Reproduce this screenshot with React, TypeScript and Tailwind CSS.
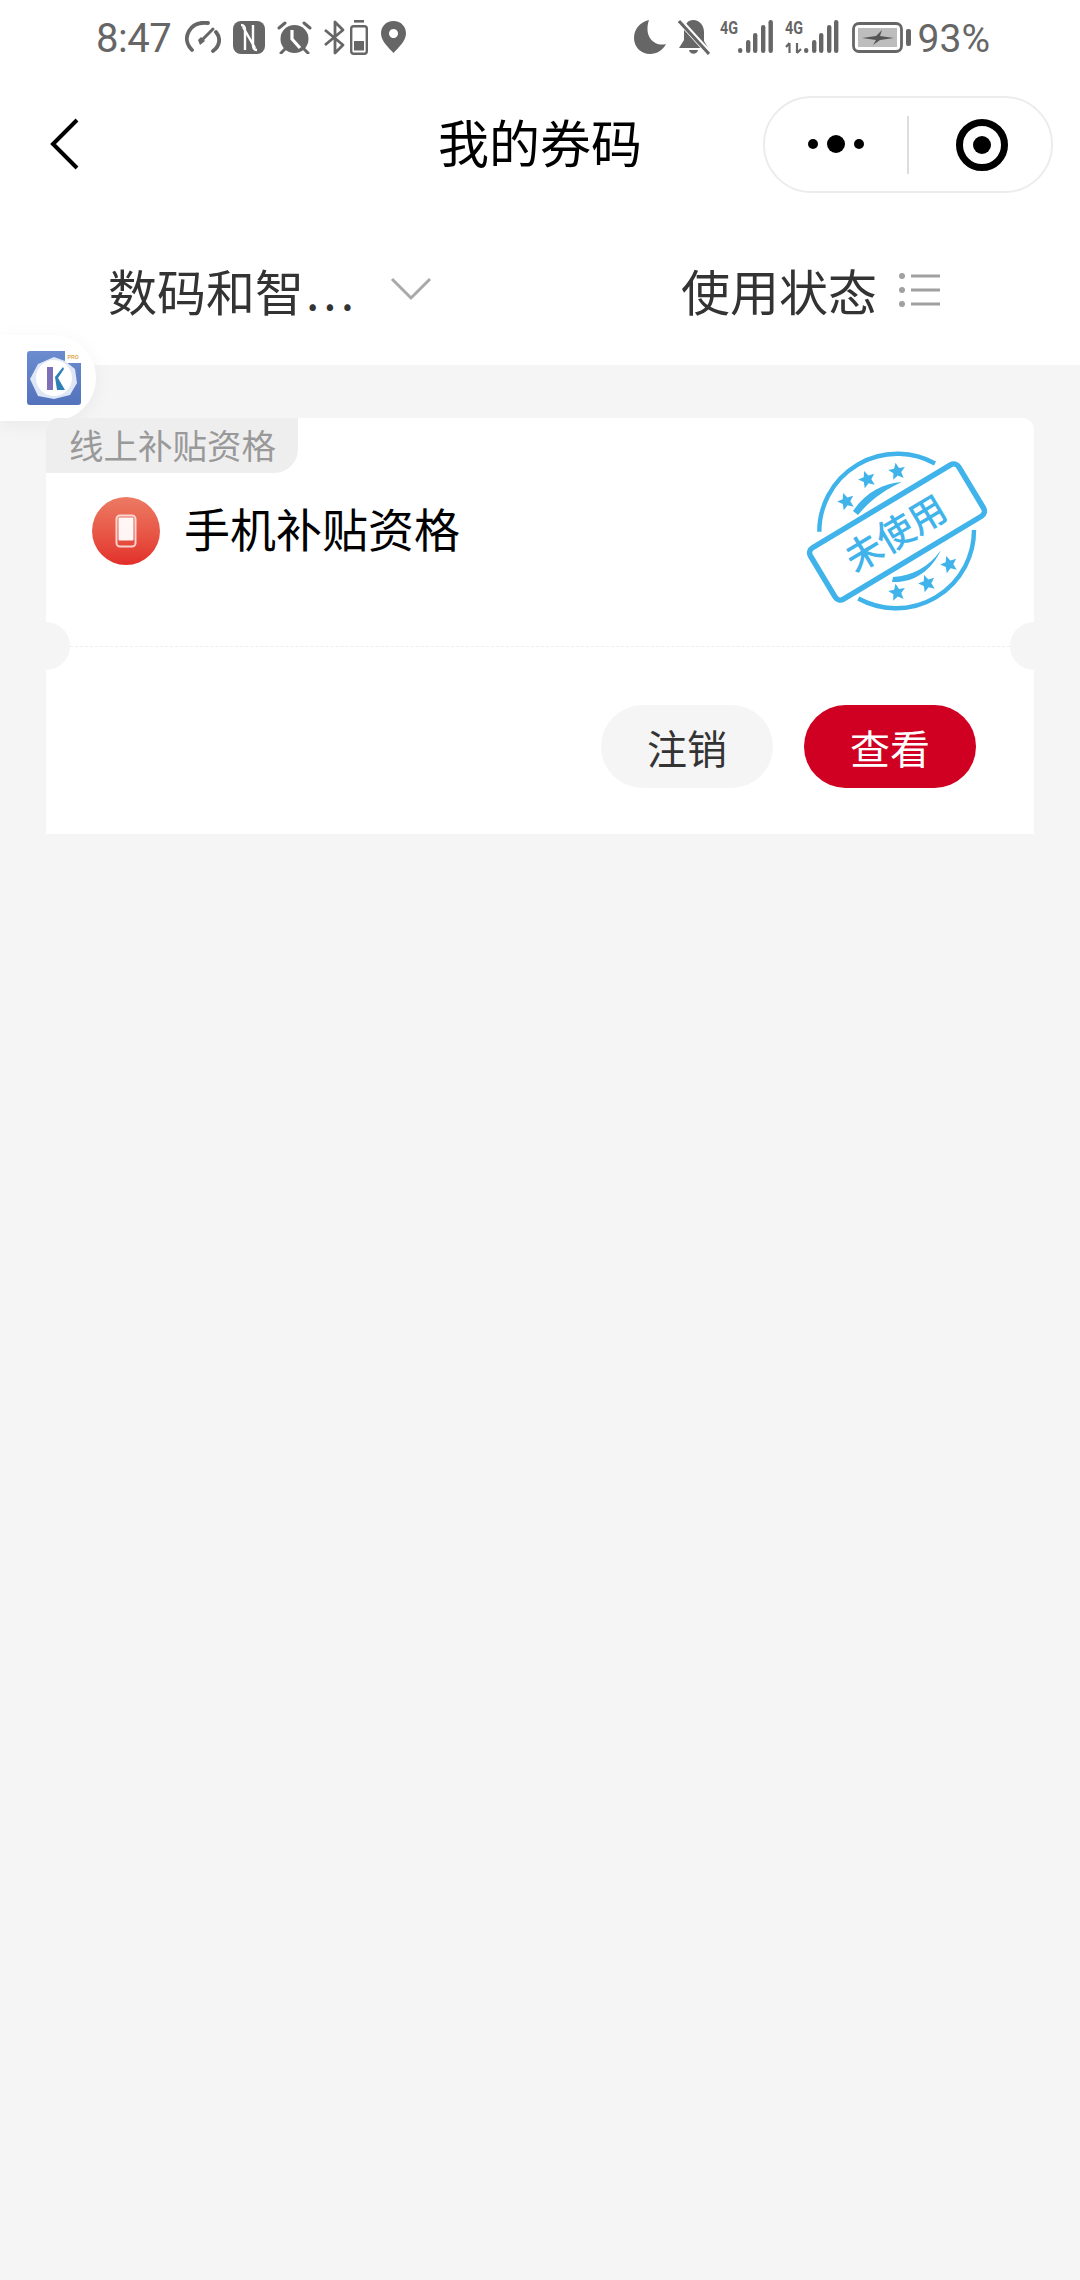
import React from "react";

const G = "#666666";

function Gauge() {
  return (
    <svg width="36" height="32" viewBox="0 0 36 32" fill="none" stroke={G} strokeWidth="3.800" strokeLinecap="round">
      <path d="M7 29 C2 24 0 17 4 10 C8 3 15 1 23 2" />
      <path d="M31 11 C36 17 35 25 28 30" />
      <path d="M28 8 L17 19" strokeWidth="3" />
      <path d="M13 19 L16 16 L20 20 L15 24 Z" fill={G} stroke="none" />
    </svg>
  );
}
function Nfc() {
  return (
    <svg width="32" height="33" viewBox="0 0 32 33">
      <rect width="32" height="33" rx="8" fill={G} />
      <path d="M8 4 C11 4 12 6 12 9 V29 M24 29 C21 29 20 27 20 24 V4 M10 6 L22 27" stroke="#fff" strokeWidth="2.400" fill="none" />
    </svg>
  );
}
function Alarm() {
  return (
    <svg width="35" height="33" viewBox="0 0 35 33">
      <circle cx="17.500" cy="18" r="14" fill={G} />
      <path d="M15 9 V18 L23 27" stroke="#fff" strokeWidth="3.200" fill="none" />
      <path d="M2 7 L8 2 M33 7 L27 2 M4 32 L8 28 M31 32 L27 28" stroke={G} strokeWidth="3" strokeLinecap="round" />
    </svg>
  );
}
function BtBattery() {
  return (
    <svg width="44" height="35" viewBox="0 0 44 35" fill="none">
      <path d="M1 10 L19 25 L11 33 V2 L19 10 L1 25" stroke={G} strokeWidth="2.800" strokeLinejoin="round" />
      <rect x="27.200" y="6.200" width="15.600" height="27.600" rx="2.500" stroke={G} strokeWidth="2.400" />
      <rect x="30" y="0" width="10" height="2.600" fill={G} />
      <rect x="30" y="21" width="10" height="9.500" fill={G} />
    </svg>
  );
}
function Pin() {
  return (
    <svg width="25" height="32" viewBox="0 0 25 32">
      <path fillRule="evenodd" d="M12.500 0 C20 0 25 5.500 25 12.500 C25 20 17 27 12.500 32 C8 27 0 20 0 12.500 C0 5.500 5 0 12.500 0 Z M12.500 8 a4.500 4.500 0 1 0 0.010 0 Z" fill={G} />
    </svg>
  );
}
function Moon() {
  return (
    <svg width="32" height="34" viewBox="0 0 32 34">
      <path d="M15 0 C6 2 0 9 0 18 C0 27 7 34 16 34 C23 34 29 30 32 24 C22 27 9 18 15 0 Z" fill={G} />
    </svg>
  );
}
function BellOff() {
  return (
    <svg width="32" height="36" viewBox="0 0 32 36">
      <path d="M15 1 C22 1 26 7 26 13 V22 L30 29 H1 L6 21 V11 C7 5 10 1 15 1 Z" fill={G} />
      <path d="M11 31 H20 C19 36 12 36 11 31 Z" fill={G} />
      <path d="M1 1 L31 34" stroke="#fff" strokeWidth="6" />
      <path d="M1 2 L31 35" stroke={G} strokeWidth="3" />
    </svg>
  );
}
function Signal({ arrows }: { arrows?: boolean }) {
  const x = arrows ? [19, 27, 34, 42, 49] : [18, 26, 33, 41, 48.500];
  const tops = [28, 20, 13, 5, 0];
  const w = arrows ? 54 : 53;
  return (
    <svg width={w} height="42" viewBox={`0 -4 ${w} 42`} className="block">
      <text x="0" y="14" fontSize="19" fontWeight="700" fill={G} textLength="18" lengthAdjust="spacingAndGlyphs" fontFamily="Roboto, sans-serif">4G</text>
      {arrows && <path d="M4.500 33 V23 M1 27 L4.500 23 M12 23 V33 M12 33 L16 29" stroke={G} strokeWidth="2.200" fill="none" />}
      {x.map((bx, i) => (
        <rect key={i} x={bx} y={tops[i]} width="4.400" height={33 - tops[i]} rx="2.200" fill={G} />
      ))}
    </svg>
  );
}
function Battery() {
  return (
    <svg width="59" height="31" viewBox="0 0 59 31">
      <rect x="1.500" y="1.500" width="48" height="28" rx="5.500" fill="none" stroke={G} strokeWidth="2.800" />
      <rect x="6" y="6" width="39" height="19" fill="#bdbdbd" />
      <path d="M10 16 L24 14 L30 8 L28 14 L42 16 L28 18 L21 23 L24 18 Z" fill="#555555" />
      <rect x="54" y="7" width="5" height="17" rx="2" fill={G} />
    </svg>
  );
}

function Phone() {
  return (
    <svg width="22" height="34" viewBox="0 0 22 34" fill="none">
      <rect x="1.500" y="1.500" width="19" height="31" rx="3.500" stroke="#ffffff" strokeOpacity="0.75" strokeWidth="2" />
      <rect x="3.500" y="3.500" width="15" height="23" rx="1" fill="#ffffff" fillOpacity="0.95" />
    </svg>
  );
}

function Star({ x, y, r = 0 }: { x: number; y: number; r?: number }) {
  return (
    <path
      transform={`translate(${x} ${y}) rotate(${r})`}
      d="M0 -8.500 L2.500 -2.700 L8.500 -2.500 L4 1.700 L5.300 8 L0 4.600 L-5.300 8 L-4 1.700 L-8.500 -2.500 L-2.500 -2.700 Z"
      fill="#3fb3ea"
    />
  );
}

function Stamp() {
  return (
    <svg width="200" height="170" viewBox="800 450 200 170" fill="none">
      <g stroke="#3fb3ea" strokeWidth="4.400" strokeLinecap="butt">
        <path d="M819.300 531.700 A78 78 0 0 1 935 463.500" />
        <path d="M974 530 A78 78 0 0 1 858.300 598.500" />
      </g>
      <path d="M853 511 C866 492 884 483 902 482 C886 489 870 500 858 515 Z" fill="#3fb3ea" />
      <path d="M893 577 C912 576 929 567 941 550 C931 571 914 583 892 582 Z" fill="#3fb3ea" />
      <Star x={846} y={501} r={-20} />
      <Star x={867} y={479} r={-20} />
      <Star x={897} y={471} r={-10} />
      <Star x={949} y={564} r={-20} />
      <Star x={927} y={583} r={-20} />
      <Star x={897} y={592} r={-10} />
      <g transform="rotate(-31 897 532)">
        <rect x="810.500" y="502" width="173" height="60" rx="6" fill="#ffffff" stroke="#3fb3ea" strokeWidth="5.500" />
        <text x="895" y="546" textAnchor="middle" fontSize="37" fontWeight="500" fill="#3fb3ea" fontFamily="'Noto Sans CJK SC', sans-serif">未使用</text>
      </g>
    </svg>
  );
}

export default function App() {
  return (
    <div className="relative w-[1080px] h-[2280px] bg-[#f5f5f6] overflow-hidden font-['Noto_Sans_CJK_SC',sans-serif]">
      <div className="bg-white h-[365px] flex flex-col">
        {/* status bar */}
        <div className="h-[74px] flex items-center justify-between pl-[96px] pr-[90px]">
          <div className="flex items-center">
            <span className="w-[75px] mt-[4px] text-[40px] leading-none text-[#666666] font-['Roboto',sans-serif] tracking-[-0.5px] whitespace-nowrap">8:47</span>
            <div className="ml-[14px]"><Gauge /></div>
            <div className="ml-[12px]"><Nfc /></div>
            <div className="ml-[12px]"><Alarm /></div>
            <div className="ml-[12px]"><BtBattery /></div>
            <div className="ml-[13px]"><Pin /></div>
          </div>
          <div className="flex items-center">
            <Moon />
            <div className="ml-[12px]"><BellOff /></div>
            <div className="ml-[10px]"><Signal /></div>
            <div className="ml-[12px]"><Signal arrows /></div>
            <div className="ml-[13px]"><Battery /></div>
            <span className="ml-[7px] mt-[4px] text-[39px] leading-none text-[#666666] font-['Roboto',sans-serif] whitespace-nowrap">93%</span>
          </div>
        </div>
        {/* nav */}
        <div className="relative h-[97px] mt-[22px] flex items-center justify-center">
          <span className="text-[51px] leading-none text-black mt-[-6px]">我的券码</span>
          <svg className="absolute left-[50px] top-[22px]" width="30" height="52" viewBox="0 0 30 52" fill="none">
            <path d="M27 2 L3 26 L27 50" stroke="#000" strokeWidth="4" />
          </svg>
          <div className="absolute left-[763px] top-0 w-[290px] h-[97px] rounded-full border-2 border-[#ececec] flex items-center">
            <div className="w-[142px] flex items-center justify-center gap-[9px] pb-[2px]">
              <span className="w-[10px] h-[10px] rounded-full bg-black" />
              <span className="w-[18px] h-[18px] rounded-full bg-black" />
              <span className="w-[10px] h-[10px] rounded-full bg-black" />
            </div>
            <div className="w-[2px] h-[58px] bg-[#dddddd]" />
            <div className="flex-1 flex items-center justify-center pl-[4px]">
              <div className="w-[52px] h-[52px] rounded-full border-[7px] border-black flex items-center justify-center">
                <div className="w-[18px] h-[18px] rounded-full bg-black" />
              </div>
            </div>
          </div>
        </div>
        {/* filters */}
        <div className="flex items-center h-[100px] mt-[46px] text-[#333333]">
          <div className="w-[540px] flex items-center pl-[108px]">
            <span className="text-[49px] leading-none whitespace-nowrap">数码和智</span>
            <span className="ml-[2px] text-[48px] leading-none tracking-[4px] whitespace-nowrap">...</span>
            <svg className="ml-[32px]" width="42" height="26" viewBox="0 0 42 26" fill="none">
              <path d="M2 3 L21 22 L40 3" stroke="#a9a9a9" strokeWidth="3" />
            </svg>
          </div>
          <div className="flex items-center ml-[141px]">
            <span className="text-[49px] leading-none whitespace-nowrap">使用状态</span>
            <svg className="ml-[22px] mt-[2px]" width="42" height="36" viewBox="0 0 42 36" fill="none">
              <path d="M12 4 H41 M12 18 H41 M12 32 H41" stroke="#a0a0a0" strokeWidth="3" />
              <circle cx="3" cy="4" r="3" fill="#a0a0a0" />
              <circle cx="3" cy="18" r="3" fill="#a0a0a0" />
              <circle cx="3" cy="32" r="3" fill="#a0a0a0" />
            </svg>
          </div>
        </div>
      </div>

      {/* floating button */}
      <div className="absolute left-0 top-[335px] w-[96px] h-[86px] bg-white rounded-r-[43px] shadow-[0_4px_20px_rgba(0,0,0,0.05)] flex items-center pl-[27px]">
        <svg width="54" height="54" viewBox="0 0 54 54">
          <defs>
            <linearGradient id="kb" x1="0" y1="0" x2="0" y2="1">
              <stop offset="0" stopColor="#6c8ccf" />
              <stop offset="1" stopColor="#5372bd" />
            </linearGradient>
          </defs>
          <path d="M3 0 H38 V12 H54 V51 a3 3 0 0 1 -3 3 H3 a3 3 0 0 1 -3 -3 V3 a3 3 0 0 1 3 -3 Z" fill="url(#kb)" />
          <path d="M27 6 L38 10 L48 18 L50 32 L43 44 L27 48 L11 45 L3 28 L11 13 Z" fill="#dfe7f6" />
          <circle cx="27" cy="27" r="18" fill="#ffffff" />
          <rect x="20" y="16" width="6" height="23" fill="#7d6fb8" />
          <path d="M28 26 L36 16 L37 18 L31 27 L38 39 H30 Z" fill="#2e7fb5" />
          <text x="40.500" y="8" fontSize="5.200" fontWeight="700" fill="#e0a84a" fontFamily="'Liberation Sans', sans-serif">PRO</text>
        </svg>
      </div>

      {/* card */}
      <div className="relative mx-[46px] mt-[53px] h-[416px] bg-white rounded-t-[12px] overflow-hidden">
        <div className="w-[252px] h-[55px] bg-[#eeeeef] rounded-br-[24px] flex items-center pl-[23px]">
          <span className="text-[34.500px] leading-none text-[#999999] whitespace-nowrap mt-[-2px]">线上补贴资格</span>
        </div>
        <div className="flex items-center h-[172px] pl-[46px] pb-[56px]">
          <div className="w-[68px] h-[68px] rounded-full bg-gradient-to-b from-[#ec7a63] to-[#e22d2a] flex items-center justify-center shrink-0">
            <Phone />
          </div>
          <span className="ml-[24px] mt-[-8px] text-[46px] leading-none text-black whitespace-nowrap">手机补贴资格</span>
        </div>
        <div className="absolute left-[754px] top-[32px]">
          <Stamp />
        </div>
        <div className="absolute left-[24px] right-[24px] top-[228px] border-t border-dashed border-[#eeeeee]" />
        <div className="absolute -left-[24px] top-[204px] w-[48px] h-[48px] rounded-full bg-[#f5f5f6]" />
        <div className="absolute -right-[24px] top-[204px] w-[48px] h-[48px] rounded-full bg-[#f5f5f6]" />
        <div className="flex justify-end gap-[31px] pr-[58px] mt-[60px]">
          <div className="w-[172px] h-[83px] rounded-full bg-[#f5f5f6] flex items-center justify-center text-[40px] leading-none text-[#333333]">注销</div>
          <div className="w-[172px] h-[83px] rounded-full bg-[#cf0022] flex items-center justify-center text-[40px] leading-none text-white">查看</div>
        </div>
      </div>
    </div>
  );
}
